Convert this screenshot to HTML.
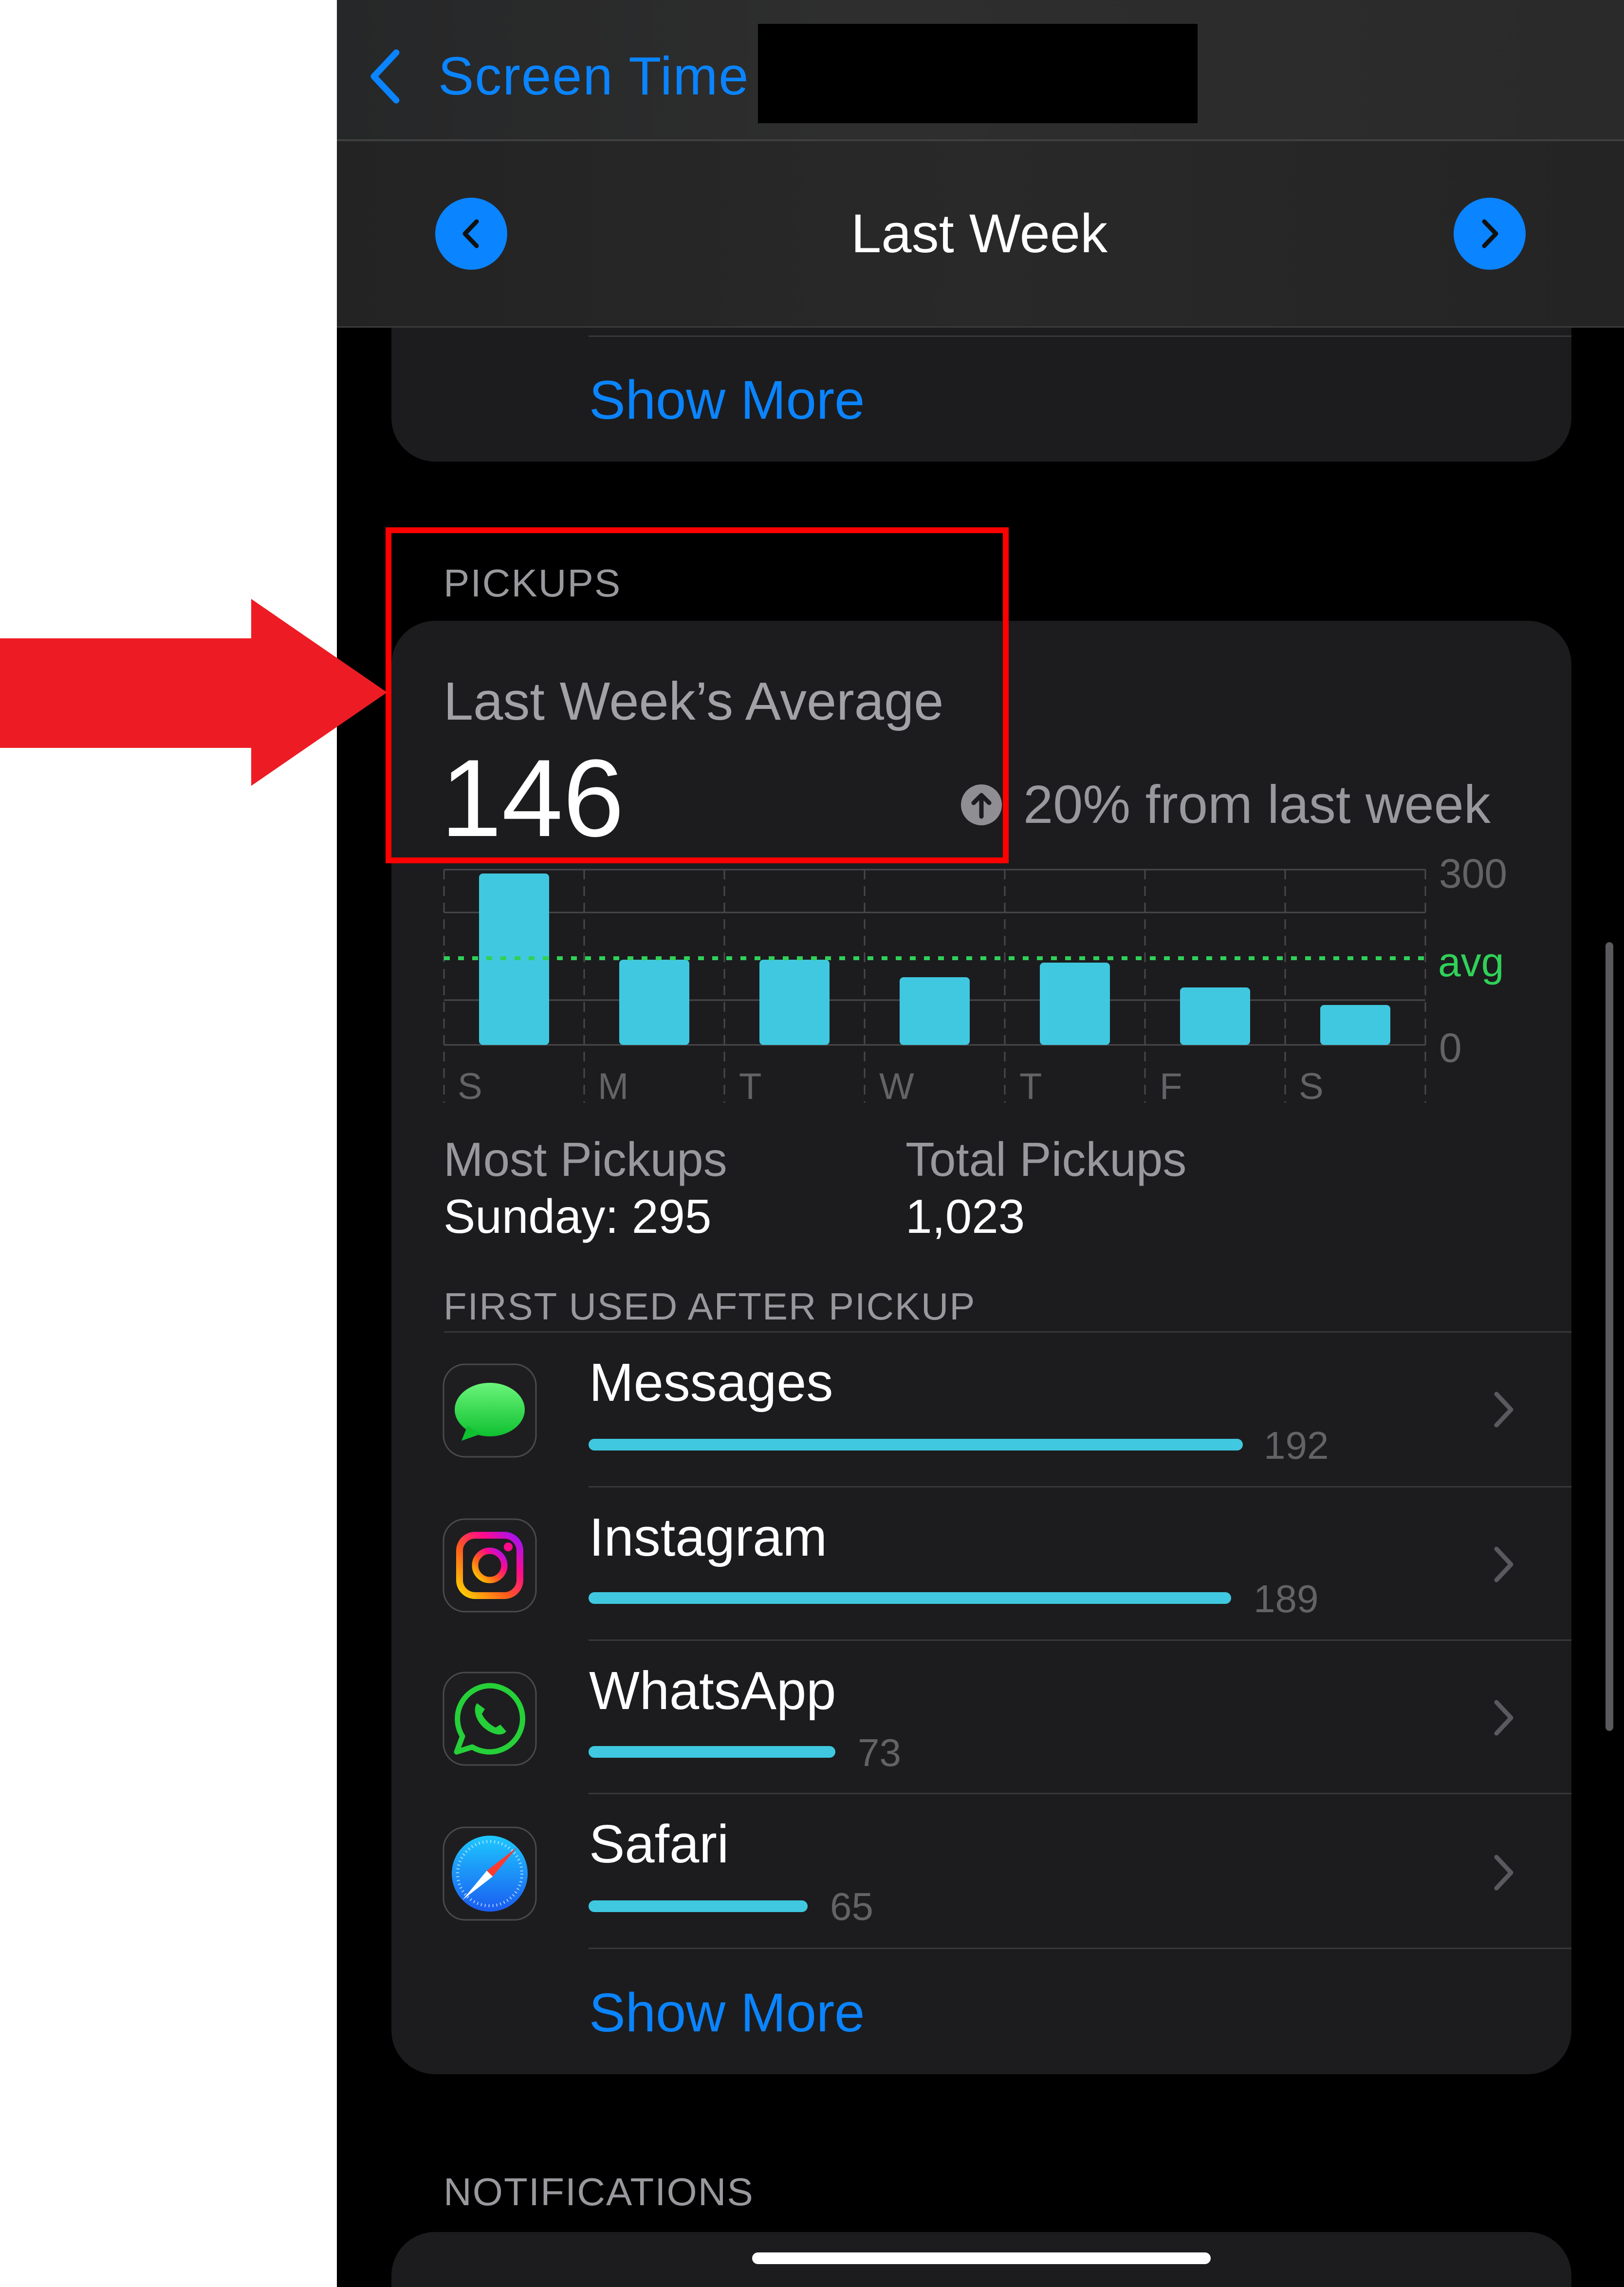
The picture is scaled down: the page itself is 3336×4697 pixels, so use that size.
<!DOCTYPE html>
<html style="width:3336px;height:4697px;overflow:hidden"><head><meta charset="utf-8">
<style>
*{margin:0;padding:0;box-sizing:border-box}
body{width:3336px;height:4697px;background:#fff;position:relative;overflow:hidden;font-family:"Liberation Sans",sans-serif}
.a{position:absolute;white-space:nowrap}
.t{position:absolute;white-space:nowrap;line-height:1}
</style></head><body>
<div class="a" style="left:692px;top:0;width:2644px;height:4697px;background:#000"></div>
<div class="a" style="left:804px;top:560px;width:2424px;height:388px;background:#1c1c1e;border-radius:0 0 90px 90px"></div>
<div class="a" style="left:1209px;top:689px;width:2019px;height:3px;background:#38383a"></div>
<div class="t" style="left:1210px;top:766px;font-size:112px;color:#0a84ff">Show More</div>
<div class="a" style="left:692px;top:0;width:2644px;height:288px;background:linear-gradient(90deg,#262728,#2e2e2e 40%,#2a2a2a)"></div>
<div class="a" style="left:692px;top:286px;width:2644px;height:4px;background:#404040"></div>
<div class="a" style="left:692px;top:290px;width:2644px;height:382px;background:linear-gradient(90deg,#232323,#292929 50%,#242424)"></div>
<div class="a" style="left:692px;top:670px;width:2644px;height:3px;background:#3a3a3a"></div>
<svg class="a" style="left:752px;top:100px" width="80" height="115" viewBox="0 0 80 115"><path d="M62 8 L16 57 L62 106" fill="none" stroke="#0a84ff" stroke-width="13" stroke-linecap="round" stroke-linejoin="round"/></svg>
<div class="t" style="left:900px;top:102px;font-size:110px;color:#0a84ff;letter-spacing:2px">Screen Time</div>
<div class="a" style="left:1557px;top:49px;width:903px;height:204px;background:#000"></div>
<div class="t" style="left:1748px;top:424px;font-size:112px;color:#fff">Last Week</div>
<svg class="a" style="left:893px;top:405px" width="150" height="150"><circle cx="75" cy="75" r="74" fill="#0a84ff"/><path d="M86 50 L62 75 L86 100" fill="none" stroke="#111" stroke-width="9" stroke-linecap="round" stroke-linejoin="round"/></svg>
<svg class="a" style="left:2985px;top:405px" width="150" height="150"><circle cx="75" cy="75" r="74" fill="#0a84ff"/><path d="M64 50 L88 75 L64 100" fill="none" stroke="#111" stroke-width="9" stroke-linecap="round" stroke-linejoin="round"/></svg>
<div class="t" style="left:911px;top:1158px;font-size:80px;color:#98989d;letter-spacing:2px">PICKUPS</div>
<div class="a" style="left:804px;top:1275px;width:2424px;height:2985px;background:#1c1c1e;border-radius:90px"></div>
<div class="t" style="left:911px;top:1386px;font-size:110px;color:#a1a1a6">Last Week’s Average</div>
<div class="t" style="left:905px;top:1526px;font-size:226px;color:#fff">146</div>
<svg class="a" style="left:1972px;top:1609px" width="88" height="88"><circle cx="44" cy="44" r="42" fill="#8e8e93"/><path d="M44 68 V24 M28 40 L44 24 L60 40" fill="none" stroke="#1c1c1e" stroke-width="9" stroke-linecap="round" stroke-linejoin="round"/></svg>
<div class="t" style="left:2102px;top:1598px;font-size:110px;color:#98989d">20% from last week</div>
<svg class="a" style="left:900px;top:1770px" width="2240" height="520">
<g stroke="#48484a" stroke-width="3">
<line x1="12" y1="16" x2="2028" y2="16"/><line x1="12" y1="104" x2="2028" y2="104"/><line x1="12" y1="284" x2="2028" y2="284"/><line x1="12" y1="376" x2="2028" y2="376"/>
</g>
<g stroke="#48484a" stroke-width="3" stroke-dasharray="20 14">
<line x1="12" y1="16" x2="12" y2="495"/><line x1="300" y1="16" x2="300" y2="495"/><line x1="588" y1="16" x2="588" y2="495"/><line x1="876" y1="16" x2="876" y2="495"/><line x1="1164" y1="16" x2="1164" y2="495"/><line x1="1452" y1="16" x2="1452" y2="495"/><line x1="1740" y1="16" x2="1740" y2="495"/><line x1="2028" y1="16" x2="2028" y2="495"/>
</g>
<g fill="#40c8e0">
<rect x="84" y="24" width="144" height="352" rx="8"/><rect x="372" y="201" width="144" height="175" rx="8"/><rect x="660" y="201" width="144" height="175" rx="8"/><rect x="948" y="237" width="144" height="139" rx="8"/><rect x="1236" y="207" width="144" height="169" rx="8"/><rect x="1524" y="258" width="144" height="118" rx="8"/><rect x="1812" y="294" width="144" height="82" rx="8"/>
</g>
<line x1="12" y1="198" x2="2028" y2="198" stroke="#30d158" stroke-width="8" stroke-dasharray="12 17"/>
</svg>
<div class="t" style="left:2956px;top:1752px;font-size:84px;color:#636366">300</div>
<div class="t" style="left:2954px;top:1934px;font-size:84px;color:#30d158">avg</div>
<div class="t" style="left:2956px;top:2110px;font-size:84px;color:#636366">0</div>
<div class="t" style="left:940px;top:2194px;font-size:76px;color:#636366">S</div>
<div class="t" style="left:1228px;top:2194px;font-size:76px;color:#636366">M</div>
<div class="t" style="left:1518px;top:2194px;font-size:76px;color:#636366">T</div>
<div class="t" style="left:1806px;top:2194px;font-size:76px;color:#636366">W</div>
<div class="t" style="left:2094px;top:2194px;font-size:76px;color:#636366">T</div>
<div class="t" style="left:2382px;top:2194px;font-size:76px;color:#636366">F</div>
<div class="t" style="left:2668px;top:2194px;font-size:76px;color:#636366">S</div>
<div class="t" style="left:911px;top:2332px;font-size:98px;color:#98989d">Most Pickups</div>
<div class="t" style="left:911px;top:2449px;font-size:98px;color:#fff">Sunday: 295</div>
<div class="t" style="left:1860px;top:2332px;font-size:98px;color:#98989d">Total Pickups</div>
<div class="t" style="left:1860px;top:2449px;font-size:98px;color:#fff">1,023</div>
<div class="t" style="left:911px;top:2644px;font-size:78px;color:#98989d;letter-spacing:2px">FIRST USED AFTER PICKUP</div>
<div class="a" style="left:912px;top:2734px;width:2316px;height:3px;background:#38383a"></div>
<div class="a" style="left:1209px;top:3052px;width:2019px;height:3px;background:#38383a"></div>
<div class="a" style="left:1209px;top:3367px;width:2019px;height:3px;background:#38383a"></div>
<div class="a" style="left:1209px;top:3682px;width:2019px;height:3px;background:#38383a"></div>
<div class="a" style="left:1209px;top:4000px;width:2019px;height:3px;background:#38383a"></div>
<svg class="a" style="left:908px;top:2799px" width="196" height="196" viewBox="0 0 196 196"><rect x="3" y="3" width="190" height="190" rx="44" fill="#1e1e20" stroke="#4a4a4c" stroke-width="3"/><defs><linearGradient id="g1" x1="0" y1="0" x2="0" y2="1"><stop offset="0" stop-color="#6af57a"/><stop offset="1" stop-color="#0fc030"/></linearGradient></defs><ellipse cx="98" cy="96" rx="72" ry="55" fill="url(#g1)"/><path d="M52 130 L40 160 L80 146 Z" fill="#0fc030"/></svg>
<svg class="a" style="left:908px;top:3117px" width="196" height="196" viewBox="0 0 196 196"><defs><linearGradient id="g2" x1="0" y1="1" x2="1" y2="0"><stop offset="0" stop-color="#ffd600"/><stop offset=".4" stop-color="#ff5a1e"/><stop offset=".7" stop-color="#ff0a8c"/><stop offset="1" stop-color="#9b14ff"/></linearGradient></defs><rect x="3" y="3" width="190" height="190" rx="44" fill="#1e1e20" stroke="#4a4a4c" stroke-width="3"/><rect x="36" y="36" width="124" height="124" rx="32" fill="none" stroke="url(#g2)" stroke-width="14"/><circle cx="98" cy="98" r="30" fill="none" stroke="url(#g2)" stroke-width="13"/><circle cx="136" cy="60" r="9" fill="#ff0a8c"/></svg>
<svg class="a" style="left:908px;top:3432px" width="196" height="196" viewBox="0 0 196 196"><rect x="3" y="3" width="190" height="190" rx="44" fill="#1e1e20" stroke="#4a4a4c" stroke-width="3"/><path d="M98 30 A68 68 0 1 1 62 156 L30 166 L42 134 A68 68 0 0 1 98 30 Z" fill="none" stroke="#25d038" stroke-width="11" stroke-linejoin="round"/><path d="M72 66 C62 78 70 104 88 118 C106 132 124 134 132 124 L120 110 L110 116 C98 110 86 98 82 88 L88 78 Z" fill="#25d038"/></svg>
<svg class="a" style="left:908px;top:3750px" width="196" height="196" viewBox="0 0 196 196"><defs><linearGradient id="g3" x1="0" y1="0" x2="0" y2="1"><stop offset="0" stop-color="#1ec8ff"/><stop offset="1" stop-color="#1a5cf0"/></linearGradient></defs><rect x="3" y="3" width="190" height="190" rx="44" fill="#1e1e20" stroke="#4a4a4c" stroke-width="3"/><circle cx="98" cy="98" r="78" fill="url(#g3)"/><circle cx="98" cy="98" r="66" fill="none" stroke="#cfe8ff" stroke-width="6" stroke-dasharray="2 6" opacity=".8"/><path d="M154 44 L104 104 L92 92 Z" fill="#ff3b30"/><path d="M42 152 L92 92 L104 104 Z" fill="#fff"/></svg>
<div class="t" style="left:1210px;top:2785px;font-size:110px;color:#fff">Messages</div>
<div class="t" style="left:1210px;top:3103px;font-size:110px;color:#fff">Instagram</div>
<div class="t" style="left:1210px;top:3418px;font-size:110px;color:#fff">WhatsApp</div>
<div class="t" style="left:1210px;top:3733px;font-size:110px;color:#fff">Safari</div>
<div class="a" style="left:1209px;top:2955px;width:1344px;height:24px;border-radius:12px;background:#40c8e0"></div>
<div class="a" style="left:1209px;top:3270px;width:1320px;height:24px;border-radius:12px;background:#40c8e0"></div>
<div class="a" style="left:1209px;top:3586px;width:507px;height:24px;border-radius:12px;background:#40c8e0"></div>
<div class="a" style="left:1209px;top:3903px;width:450px;height:24px;border-radius:12px;background:#40c8e0"></div>
<div class="t" style="left:2596px;top:2929px;font-size:80px;color:#636366">192</div>
<div class="t" style="left:2575px;top:3244px;font-size:80px;color:#636366">189</div>
<div class="t" style="left:1762px;top:3560px;font-size:80px;color:#636366">73</div>
<div class="t" style="left:1705px;top:3876px;font-size:80px;color:#636366">65</div>
<svg class="a" style="left:3060px;top:2855px" width="60" height="80"><path d="M14 8 L44 40 L14 72" fill="none" stroke="#5a5a5e" stroke-width="9" stroke-linecap="round" stroke-linejoin="round"/></svg>
<svg class="a" style="left:3060px;top:3173px" width="60" height="80"><path d="M14 8 L44 40 L14 72" fill="none" stroke="#5a5a5e" stroke-width="9" stroke-linecap="round" stroke-linejoin="round"/></svg>
<svg class="a" style="left:3060px;top:3488px" width="60" height="80"><path d="M14 8 L44 40 L14 72" fill="none" stroke="#5a5a5e" stroke-width="9" stroke-linecap="round" stroke-linejoin="round"/></svg>
<svg class="a" style="left:3060px;top:3806px" width="60" height="80"><path d="M14 8 L44 40 L14 72" fill="none" stroke="#5a5a5e" stroke-width="9" stroke-linecap="round" stroke-linejoin="round"/></svg>
<div class="t" style="left:1210px;top:4078px;font-size:112px;color:#0a84ff">Show More</div>
<div class="t" style="left:911px;top:4462px;font-size:80px;color:#98989d;letter-spacing:2px">NOTIFICATIONS</div>
<div class="a" style="left:804px;top:4584px;width:2424px;height:113px;background:#1c1c1e;border-radius:90px 90px 0 0"></div>
<div class="a" style="left:1545px;top:4626px;width:942px;height:24px;border-radius:12px;background:#fff"></div>
<div class="a" style="left:3298px;top:1935px;width:16px;height:1620px;border-radius:8px;background:#5a5a5e"></div>
<div class="a" style="left:792px;top:1083px;width:1280px;height:690px;border:12px solid #f00"></div>
<svg class="a" style="left:0;top:1220px" width="800" height="400"><polygon points="0,91 516,91 516,10 795,202 516,394 516,316 0,316" fill="#ed1c24"/></svg>
</body></html>
